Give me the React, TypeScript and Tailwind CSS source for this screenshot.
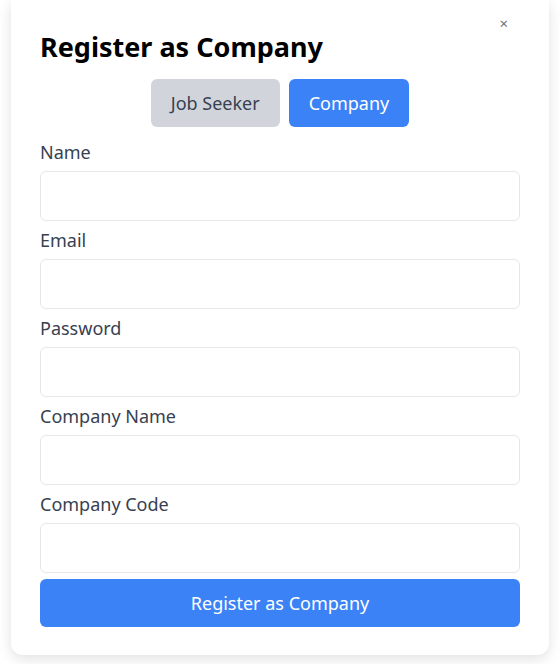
import React from 'react';

const fields = ['Name', 'Email', 'Password', 'Company Name', 'Company Code'];

export default function App() {
  return (
    <div className="min-h-screen bg-white px-[11px] pb-[9px]" style={{ fontFamily: '"Noto Sans", "Open Sans", sans-serif' }}>
      <div className="relative rounded-b-xl bg-white px-[29px] pt-[30px] pb-7 shadow-[0_4px_14px_rgba(0,0,0,0.12)]">
        <button className="absolute right-[41px] top-[13px] text-[15px] leading-5 text-[#6b7280]">×</button>
        <h2 className="text-[27px] font-bold leading-[34px] text-black">Register as Company</h2>
        <div className="mt-[15px] mb-3 flex justify-center gap-[9px]">
          <button className="rounded-md bg-[#d1d5db] px-5 py-2.5 text-lg leading-7 text-[#374151]">Job Seeker</button>
          <button className="rounded-md bg-[#3b82f6] px-5 py-2.5 text-lg leading-7 text-white">Company</button>
        </div>
        <form>
          {fields.map((f) => (
            <div key={f}>
              <label className="mb-[5px] block text-lg leading-[27px] text-[#374151]">{f}</label>
              <input
                type={f === 'Password' ? 'password' : 'text'}
                className="mb-[6px] block h-[50px] w-full rounded-md border border-[#e5e7eb] bg-white px-3 text-lg outline-none"
              />
            </div>
          ))}
          <button type="button" className="block h-12 w-full rounded-md bg-[#3b82f6] text-lg text-white">
            Register as Company
          </button>
        </form>
      </div>
    </div>
  );
}
